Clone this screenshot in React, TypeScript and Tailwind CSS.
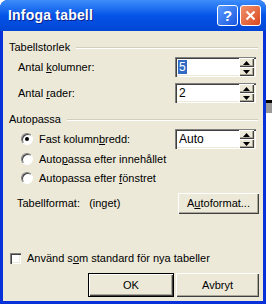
import React from 'react'

const font = { fontFamily: '"Liberation Sans", Arial, sans-serif' }

const raised = 'shadow-[inset_1px_1px_0_#ffffff,inset_-1px_-1px_0_#404040,inset_-2px_-2px_0_#aca899]'
const sunken = 'shadow-[inset_1px_1px_0_#808080,inset_2px_2px_0_#404040,inset_-1px_-1px_0_#ffffff,inset_-2px_-2px_0_#ece9d8]'

function U({ children }: { children: React.ReactNode }) {
  return <span className="underline underline-offset-[1px]">{children}</span>
}

function Group({ title }: { title: string }) {
  return (
    <div className="flex items-center h-[13px] pl-[6px] pr-[5px]">
      <span className="text-[11px] text-black leading-none">{title}</span>
      <div className="flex-1 ml-[6px] flex flex-col">
        <div className="h-px bg-[#d0d0bf]" />
        <div className="h-px bg-white" />
      </div>
    </div>
  )
}

function Arrow({ up }: { up?: boolean }) {
  return (
    <div className={`w-[15px] h-[9px] bg-[#ece9d8] ${raised} flex items-center justify-center`}>
      <svg width="7" height="4" viewBox="0 0 7 4">
        {up ? <path d="M3.5 0L7 4H0Z" fill="#000" /> : <path d="M0 0H7L3.5 4Z" fill="#000" />}
      </svg>
    </div>
  )
}

function Spin({ value, selected }: { value: string; selected?: boolean }) {
  return (
    <div className={`w-[81px] h-[20px] bg-white ${sunken} flex items-center pl-[3px] pr-[2px]`}>
      <div className="flex-1 flex items-center">
        <span className={`text-[12px] leading-[14px] px-[1px] ${selected ? 'bg-[#316ac5] text-white' : 'text-black'}`}>{value}</span>
      </div>
      <div className="flex flex-col">
        <Arrow up />
        <Arrow />
      </div>
    </div>
  )
}

function Radio({ checked }: { checked?: boolean }) {
  return (
    <div className="w-[12px] h-[12px] rounded-full bg-white border border-t-[#808080] border-l-[#808080] border-b-[#ffffff] border-r-[#ffffff] shadow-[inset_1px_1px_0_#404040] flex items-center justify-center">
      {checked && <div className="w-[4px] h-[4px] rounded-full bg-black" />}
    </div>
  )
}

export default function App() {
  return (
    <div className="w-[272px] h-[308px] bg-white flex overflow-hidden" style={font}>
      {/* Window */}
      <div className="w-[266px] h-[304px] rounded-t-[8px] bg-[#0831d9] flex flex-col">
        {/* Title bar */}
        <div className="h-[31px] rounded-t-[8px] bg-gradient-to-b from-[#3d8dfb] via-[#0554e8] to-[#0246d4] flex items-center pl-[8px] pr-[5px]">
          <span className="flex-1 text-white font-bold text-[14px] tracking-[0.2px] [text-shadow:1px_1px_0_#0a1e8a]">Infoga tabell</span>
          <div className="w-[21px] h-[21px] rounded-[3px] border border-white bg-gradient-to-br from-[#5b9bff] to-[#1c56e0] flex items-center justify-center text-white font-bold text-[15px] leading-none mr-[2px]">?</div>
          <div className="w-[21px] h-[21px] rounded-[3px] border border-white bg-gradient-to-br from-[#f0906a] to-[#d8461a] flex items-center justify-center">
            <svg width="11" height="11" viewBox="0 0 11 11">
              <path d="M1.5 1.5L9.5 9.5M9.5 1.5L1.5 9.5" stroke="#fff" strokeWidth="2" />
            </svg>
          </div>
        </div>

        {/* Body */}
        <div className="flex-1 mx-[3px] mb-[3px] bg-[#ece9d8] flex flex-col text-[11px] text-black pt-[10px]">
          <Group title="Tabellstorlek" />
          <div className="flex items-center h-[20px] mt-[3px] pl-[15px] pr-[7px]">
            <span className="flex-1">Antal <U>k</U>olumner:</span>
            <Spin value="5" selected />
          </div>
          <div className="flex items-center h-[20px] mt-[6px] pl-[15px] pr-[7px]">
            <span className="flex-1">Antal <U>r</U>ader:</span>
            <Spin value="2" />
          </div>

          <div className="mt-[10px]">
            <Group title="Autopassa" />
          </div>
          <div className="flex items-center h-[20px] mt-[3px] pl-[18px] pr-[7px]">
            <Radio checked />
            <span className="flex-1 ml-[6px]">Fast kolumn<U>b</U>redd:</span>
            <Spin value="Auto" />
          </div>
          <div className="flex items-center h-[16px] mt-[2px] pl-[18px]">
            <Radio />
            <span className="ml-[6px]">Auto<U>p</U>assa efter innehållet</span>
          </div>
          <div className="flex items-center h-[16px] mt-[3px] pl-[18px]">
            <Radio />
            <span className="ml-[6px]">Autopassa efter <U>f</U>önstret</span>
          </div>
          <div className="flex items-center h-[22px] mt-[6px] pl-[14px] pr-[4px]">
            <span className="flex-1">Tabellformat:&nbsp;&nbsp; (inget)</span>
            <div className={`w-[81px] h-[21px] bg-[#ece9d8] ${raised} flex items-center justify-center`}>
              A<U>u</U>toformat...
            </div>
          </div>

          <div className="flex items-center h-[13px] mt-[38px] pl-[7px]">
            <div className={`w-[11px] h-[11px] bg-white ${sunken}`} />
            <span className="ml-[6px]">Använd s<U>o</U>m standard för nya tabeller</span>
          </div>

          <div className="flex items-center justify-end gap-[2px] mt-[8px] pr-[4px]">
            <div className="w-[86px] h-[24px] border border-black">
              <div className={`w-full h-full bg-[#ece9d8] ${raised} flex items-center justify-center`}>OK</div>
            </div>
            <div className={`w-[83px] h-[24px] bg-[#ece9d8] ${raised} flex items-center justify-center`}>Avbryt</div>
          </div>
        </div>
      </div>

      {/* Document behind the dialog */}
      <div className="flex-1 flex flex-col pt-[100px]">
        <div className="h-[3px] bg-black" />
        <div className="h-[10px] bg-[#9a9a9a]" />
      </div>
    </div>
  )
}
